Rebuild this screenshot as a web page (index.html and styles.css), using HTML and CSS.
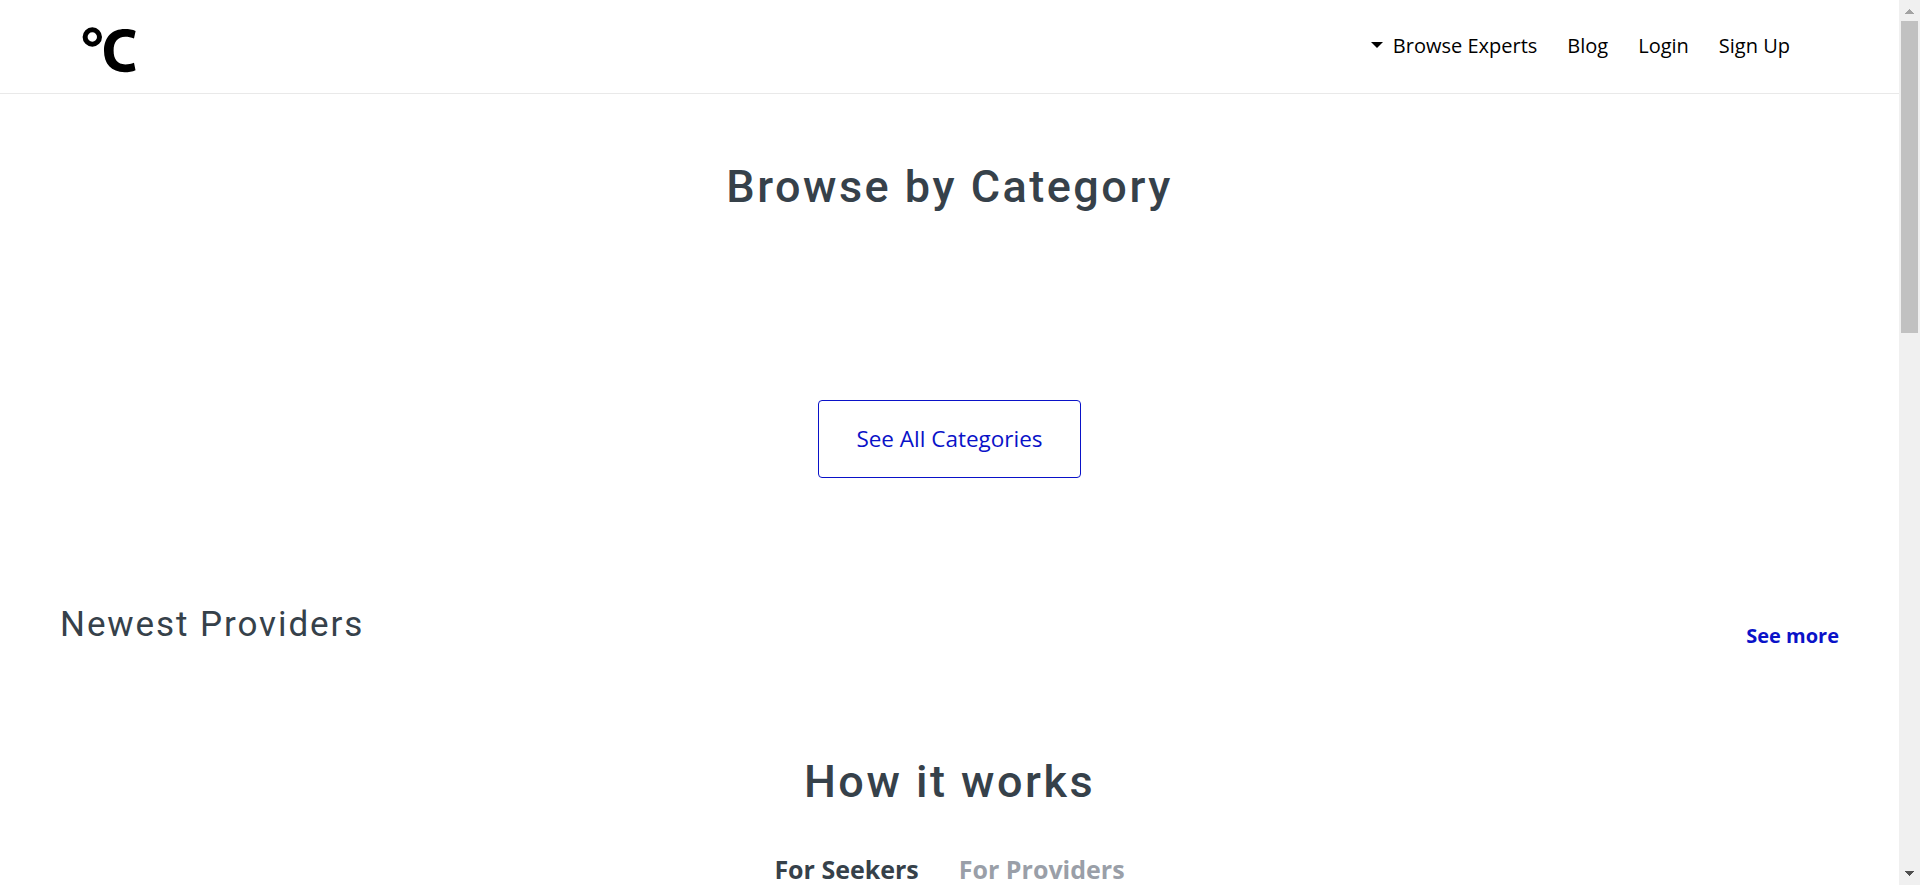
FILE: index.html
```html
<!DOCTYPE html>
<html lang="en">
<head>
<meta charset="utf-8">
<title>Browse Experts</title>
<link rel="stylesheet" href="styles.css">
</head>
<body>
<div class="page">
  <header class="header">
    <a class="logo" aria-label="Home">
      <svg width="56" height="48" viewBox="0 0 56 48">
        <circle cx="10.3" cy="10" r="7.2" fill="none" stroke="#000" stroke-width="5"/>
        <path d="M53.6 3.9 L52 11.5 C49 10.4 46.2 9.8 43.3 9.8 C35.5 9.8 31.6 15.2 31.6 23.6 C31.6 32.5 35.6 37.4 43.3 37.4 C46.4 37.4 49.3 36.8 52 35.8 L53.5 43.2 C50.5 44.7 46.6 45.2 42.6 45.2 C29.2 45.2 22 36.7 22 23.8 C22 10.4 30 2 42.8 2 C47 2 50.6 2.6 53.6 3.9 Z"/>
      </svg>
    </a>
    <nav class="nav">
      <a class="nav-item"><svg class="caret" width="12" height="6" viewBox="0 0 12 6"><path d="M0 0H12L6 6Z"/></svg>Browse Experts</a>
      <a class="nav-item">Blog</a>
      <a class="nav-item">Login</a>
      <a class="nav-item">Sign Up</a>
    </nav>
  </header>
  <main>
    <section class="categories">
      <h1 class="title">Browse by Category</h1>
      <a class="button">See All Categories</a>
    </section>
    <section class="providers">
      <h2 class="subtitle">Newest Providers</h2>
      <a class="more">See more</a>
    </section>
    <section class="how">
      <h1 class="title">How it works</h1>
      <div class="tabs">
        <a class="tab active">For Seekers</a>
        <a class="tab">For Providers</a>
      </div>
    </section>
  </main>
</div>
<div class="scrollbar">
  <svg class="arrow up" width="9" height="5" viewBox="0 0 9 5" shape-rendering="crispEdges"><path d="M4 0h1v1h1v1h1v1h1v1h1v1H0V4h1V3h1V2h1V1h1z"/></svg>
  <div class="thumb"></div>
  <svg class="arrow down" width="9" height="5" viewBox="0 0 9 5" shape-rendering="crispEdges"><path d="M0 0h9v1H8v1H7v1H6v1H5v1H4V4H3V3H2V2H1V1H0z"/></svg>
</div>
</body>
</html>
```
FILE: styles.css
```css
* { box-sizing: border-box; }
body {
  margin: 0;
  height: 885px;
  overflow: hidden;
  display: flex;
  background: #fff;
  color: #36414a;
  font-family: "Open Sans", sans-serif;
}
.page { width: 1899px; height: 885px; overflow: hidden; }
.header {
  display: flex;
  justify-content: space-between;
  align-items: flex-start;
  height: 94px;
  padding: 27px 109px 0 82px;
  border-bottom: 1px solid #e9e9e9;
}
.logo svg { display: block; }
.nav { display: flex; gap: 30px; padding-top: 5px; }
.nav-item {
  display: flex;
  align-items: center;
  color: #000;
  font-size: 20px;
  line-height: 28px;
  white-space: nowrap;
}
.caret { margin: 0 10px 2px 0; }
.title {
  margin: 0;
  font: 500 45px/60px Roboto, sans-serif;
  letter-spacing: 2.5px;
}
.categories {
  display: flex;
  flex-direction: column;
  align-items: center;
  padding-top: 63px;
}
.button {
  width: 263px;
  height: 78px;
  margin-top: 183px;
  border: 1px solid #0a12c8;
  border-radius: 4px;
  color: #0a12c8;
  font-size: 22.5px;
  font-weight: 400;
  line-height: 75px;
  text-align: center;
}
.providers {
  display: flex;
  justify-content: space-between;
  align-items: flex-end;
  height: 174px;
  padding: 0 60px 0 60px;
}
.subtitle {
  margin: 0;
  font: 400 35px/54px Roboto, sans-serif;
  letter-spacing: 1.92px;
}
.more {
  color: #0a12c8;
  font-size: 20px;
  font-weight: 700;
  line-height: 32px;
}
.how {
  display: flex;
  flex-direction: column;
  align-items: center;
  padding-top: 100px;
}
.tabs { display: flex; gap: 40px; margin-top: 39px; }
.tab {
  color: #9a9fa8;
  font-size: 25px;
  font-weight: 700;
  line-height: 36px;
}
.tab.active { color: #36414a; }
.scrollbar {
  display: flex;
  flex-direction: column;
  align-items: center;
  width: 21px;
  height: 885px;
  padding: 9px 0;
  background: #f0f0f0;
}
.arrow.up { fill: #a3a3a3; }
.arrow.down { fill: #505050; margin-top: auto; }
.thumb { width: 17px; height: 312px; margin-top: 7px; background: #c1c1c1; }
```
